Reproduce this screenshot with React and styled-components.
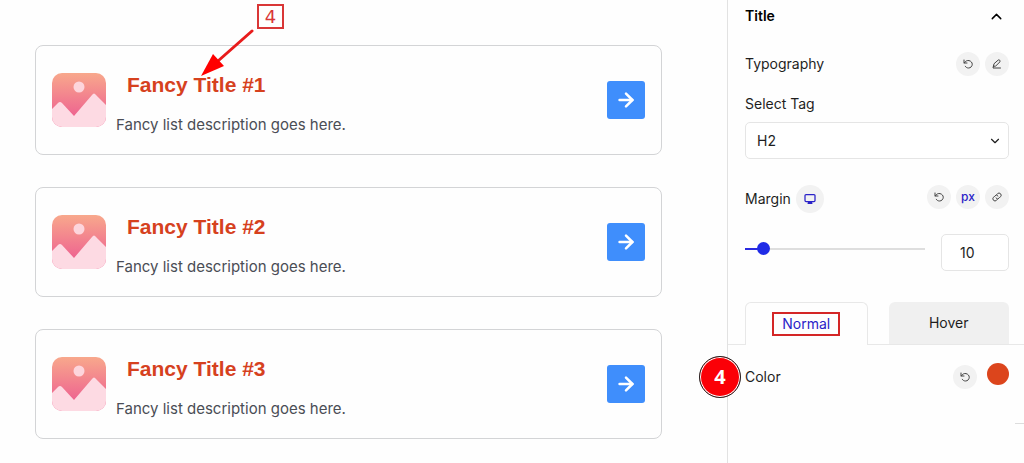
import React, { useState } from "react";
import styled, { createGlobalStyle } from "styled-components";
import { ArrowRight, ChevronUp, ChevronDown, Link2 } from "lucide-react";

const items = [
  { id: 1, title: "Fancy Title #1" },
  { id: 2, title: "Fancy Title #2" },
  { id: 3, title: "Fancy Title #3" },
];

const MAX_MARGIN = 140;

function ResetIcon() {
  return (
    <LineIcon width="10" height="10" viewBox="0 0 20 20" aria-hidden="true">
      <path d="M2 2v6h6" />
      <path d="M2.500 8C5 3.500 9 2.500 12 3.200c4 .9 6.500 4 6.500 7.300 0 4-3.200 7.500-7.500 7.500-3 0-5.300-1.400-6.500-3.500" />
    </LineIcon>
  );
}

function EditIcon() {
  return (
    <LineIcon width="10" height="10" viewBox="0 0 20 20" aria-hidden="true">
      <path d="M3 14l1-4.500L12.500 2q1.500-1 3 .5t.5 3L8 13.500z" />
      <path d="M3 14l-1 4h15" />
    </LineIcon>
  );
}

function DesktopIcon() {
  return (
    <svg width="12" height="12" viewBox="0 0 24 24" fill="none" aria-hidden="true">
      <rect x="2" y="3" width="20" height="14" rx="2" stroke="currentColor" strokeWidth="2.500" />
      <path d="M8 17h8l1 5H7z" fill="currentColor" />
    </svg>
  );
}

function Thumbnail() {
  return (
    <Thumb viewBox="0 0 54 54" aria-hidden="true">
      <defs>
        <linearGradient id="sky" x1="0" y1="0" x2="0" y2="1">
          <stop offset="0" stopColor="#f8a88c" />
          <stop offset="0.8" stopColor="#ee6490" />
        </linearGradient>
        <clipPath id="frame">
          <rect width="54" height="54" rx="10" />
        </clipPath>
      </defs>
      <g clipPath="url(#frame)">
        <rect width="54" height="54" fill="url(#sky)" />
        <circle cx="27" cy="14" r="5.500" fill="#fdd5dc" />
        <path
          d="M0 36l6-6q2-2 4 0l12 13 18-21q2-3 4 0l10 10v22H0z"
          fill="#fddae3"
        />
      </g>
    </Thumb>
  );
}

function ListItem({ title, marked }) {
  return (
    <Card>
      <Thumbnail />
      <CardText>
        <CardTitle>{title}</CardTitle>
        <CardInfo>Fancy list description goes here.</CardInfo>
      </CardText>
      <GoButton type="button" aria-label={`Open ${title}`}>
        <ArrowRight size={22} strokeWidth={2.75} />
      </GoButton>
      {marked && (
        <Pointer>
          <PointerLabel>4</PointerLabel>
          <svg width="54" height="48" viewBox="0 0 54 48" aria-hidden="true">
            <path d="M51 2L17 32" stroke="#e81c1c" strokeWidth="3" strokeLinecap="round" />
            <path d="M0 47L12 25 23 37z" fill="#ff0000" />
          </svg>
        </Pointer>
      )}
    </Card>
  );
}

export default function App() {
  const [tag, setTag] = useState("H2");
  const [margin, setMargin] = useState(10);
  const [tab, setTab] = useState("Normal");

  return (
    <Page>
      <GlobalStyle />
      <Preview>
        {items.map((item) => (
          <ListItem key={item.id} title={item.title} marked={item.id === 1} />
        ))}
      </Preview>

      <Sidebar>
        <PanelHeader type="button" aria-expanded="true">
          Title
          <ChevronUp size={17} />
        </PanelHeader>

        <Row $top={20}>
          <span>Typography</span>
          <Actions>
            <RoundButton type="button" aria-label="Reset typography">
              <ResetIcon />
            </RoundButton>
            <RoundButton type="button" aria-label="Edit typography">
              <EditIcon />
            </RoundButton>
          </Actions>
        </Row>

        <FieldLabel htmlFor="tag">Select Tag</FieldLabel>
        <SelectBox>
          <select id="tag" value={tag} onChange={(e) => setTag(e.target.value)}>
            <option>H1</option>
            <option>H2</option>
            <option>H3</option>
            <option>H4</option>
          </select>
          <ChevronDown size={14} />
        </SelectBox>

        <Row $top={26}>
          <Actions>
            <label htmlFor="margin">Margin</label>
            <RoundButton type="button" $large $active aria-label="Desktop">
              <DesktopIcon />
            </RoundButton>
          </Actions>
          <Actions $raised>
            <RoundButton type="button" aria-label="Reset margin">
              <ResetIcon />
            </RoundButton>
            <RoundButton type="button" $active>
              px
            </RoundButton>
            <RoundButton type="button" aria-label="Link sides">
              <LinkIcon width="10" height="10" viewBox="0 0 20 20" aria-hidden="true">
                <path d="M8 12a4 4 0 0 0 6 .4l3-3a4 4 0 0 0-6-6L9.500 5" />
                <path d="M12 8a4 4 0 0 0-6-.4l-3 3a4 4 0 0 0 6 6l1.500-1.600" />
              </LinkIcon>
            </RoundButton>
          </Actions>
        </Row>

        <SliderRow>
          <Slider
            id="margin"
            type="range"
            min="0"
            max={MAX_MARGIN}
            value={margin}
            style={{ "--fill": `${(margin / MAX_MARGIN) * 100}%` }}
            onChange={(e) => setMargin(e.target.value)}
          />
          <NumberBox
            type="text"
            aria-label="Margin value"
            value={margin}
            onChange={(e) => setMargin(e.target.value)}
          />
        </SliderRow>

        <Tabs role="tablist">
          {["Normal", "Hover"].map((name) => (
            <Tab
              key={name}
              type="button"
              role="tab"
              aria-selected={tab === name}
              $active={tab === name}
              onClick={() => setTab(name)}
            >
              {name === "Normal" ? <Outline>{name}</Outline> : name}
            </Tab>
          ))}
        </Tabs>

        <Row $top={18}>
          <StepBadge>4</StepBadge>
          <span>Color</span>
          <Actions $wide>
            <RoundButton type="button" aria-label="Reset color">
              <ResetIcon />
            </RoundButton>
            <Swatch type="button" aria-label="Pick color" />
          </Actions>
        </Row>
        <Divider />
      </Sidebar>
    </Page>
  );
}

const GlobalStyle = createGlobalStyle`
  * {
    box-sizing: border-box;
  }
  body {
    margin: 0;
    background: #fefefe;
    color: #1e1e1e;
    font-family: Inter, "Liberation Sans", sans-serif;
    font-size: 14px;
    line-height: 20px;
  }
  button,
  input,
  select {
    font: inherit;
    color: inherit;
  }
`;

const Page = styled.div`
  display: flex;
  min-height: 100vh;
`;

const Preview = styled.main`
  flex: 1;
  display: flex;
  flex-direction: column;
  gap: 32px;
  padding: 45px 65px 24px 35px;
`;

const Card = styled.article`
  position: relative;
  display: flex;
  align-items: center;
  padding: 16px;
  min-height: 110px;
  border: 1px solid #d3d4d6;
  border-radius: 8px;
`;

const Thumb = styled.svg`
  width: 54px;
  height: 54px;
  flex: none;
`;

const CardText = styled.div`
  flex: 1;
  padding: 8px 0 0 10px;
`;

const CardTitle = styled.h2`
  margin: 0 0 18px 11px;
  color: #d6411e;
  font-family: "Liberation Sans", Arial, sans-serif;
  font-size: 21px;
  line-height: 24px;
`;

const CardInfo = styled.p`
  margin: 0;
  color: #4a4d55;
  font-size: 15px;
`;

const GoButton = styled.button`
  display: grid;
  place-items: center;
  width: 38px;
  height: 38px;
  padding: 0;
  border: 0;
  border-radius: 3px;
  background: #3f8efc;
  color: #fff;
`;

const Pointer = styled.div`
  position: absolute;
  top: -42px;
  left: 165px;
  svg {
    display: block;
    fill: none;
  }
`;

const PointerLabel = styled.span`
  display: block;
  width: 27px;
  height: 25px;
  margin-left: 56px;
  border: 2px solid #d93636;
  color: #d93636;
  font-family: "DejaVu Sans", sans-serif;
  font-size: 18px;
  line-height: 22px;
  text-align: center;
`;

const Sidebar = styled.aside`
  width: 297px;
  flex: none;
  padding: 0 15px 0 17px;
  border-left: 1px solid #e2e2e2;
`;

const PanelHeader = styled.button`
  display: flex;
  align-items: center;
  justify-content: space-between;
  width: 100%;
  height: 32px;
  padding: 0 4px 0 0;
  border: 0;
  background: none;
  color: #000;
  font-weight: 600;
`;

const Row = styled.div`
  position: relative;
  display: flex;
  align-items: center;
  justify-content: space-between;
  margin-top: ${(props) => props.$top}px;
`;

const Actions = styled.div`
  display: flex;
  align-items: center;
  align-self: ${(props) => (props.$raised ? "flex-start" : "auto")};
  gap: ${(props) => (props.$wide ? 10 : 5)}px;
`;

const RoundButton = styled.button`
  display: grid;
  place-items: center;
  width: ${(props) => (props.$large ? 28 : 24)}px;
  height: ${(props) => (props.$large ? 28 : 24)}px;
  padding: 0;
  border: 0;
  border-radius: 50%;
  background: #f2f2f2;
  color: ${(props) => (props.$active ? "#2a22c8" : "#444")};
  font-size: 12px;
  font-weight: 500;
`;

const LineIcon = styled.svg`
  fill: none;
  stroke: currentColor;
  stroke-width: 2;
  stroke-linecap: round;
  stroke-linejoin: round;
`;

const LinkIcon = styled(LineIcon)``;

const FieldLabel = styled.label`
  display: block;
  margin-top: 18px;
`;

const SelectBox = styled.div`
  display: grid;
  align-items: center;
  margin-top: 8px;
  select,
  svg {
    grid-area: 1 / 1;
  }
  select {
    appearance: none;
    height: 37px;
    padding: 0 11px;
    border: 1px solid #e5e5e5;
    border-radius: 5px;
    background: #fff;
  }
  svg {
    justify-self: end;
    margin-right: 7px;
    pointer-events: none;
  }
`;

const SliderRow = styled.div`
  display: flex;
  align-items: center;
  gap: 16px;
  margin-top: 21px;
`;

const Slider = styled.input`
  appearance: none;
  flex: 1;
  min-width: 0;
  height: 13px;
  margin: 0 0 8px;
  background: linear-gradient(#2a2ae0, #2a2ae0) left / var(--fill) 2px no-repeat,
    linear-gradient(#dedede, #dedede) center / 100% 2px no-repeat;
  &::-webkit-slider-thumb {
    appearance: none;
    width: 13px;
    height: 13px;
    border-radius: 50%;
    background: #1f2be6;
  }
`;

const NumberBox = styled.input`
  width: 68px;
  height: 37px;
  padding: 0 18px;
  border: 1px solid #e5e5e5;
  border-radius: 5px;
  background: #fff;
`;

const Tabs = styled.div`
  display: flex;
  gap: 21px;
  height: 43px;
  margin: 31px -15px 0 -17px;
  padding: 0 15px 0 17px;
  border-bottom: 1px solid #e8e8e8;
`;

const Tab = styled.button`
  flex: 1;
  height: ${(props) => (props.$active ? 43 : 42)}px;
  padding: 0;
  border: ${(props) => (props.$active ? "1px solid #e8e8e8" : "0")};
  border-bottom: 0;
  border-radius: 6px 6px 0 0;
  background: ${(props) => (props.$active ? "#fefefe" : "#f0f0f0")};
  color: ${(props) => (props.$active ? "#2a22c8" : "#1e1e1e")};
`;

const Outline = styled.span`
  display: inline-block;
  padding: 0 8px;
  border: 2px solid #d42626;
`;

const StepBadge = styled.span`
  position: absolute;
  top: 50%;
  left: -46px;
  width: 42px;
  height: 42px;
  margin-top: -21px;
  border: 1px solid #222;
  border-radius: 50%;
  box-shadow: inset 0 0 0 1px #fff;
  background: #fb0007;
  color: #fff;
  font-family: "Open Sans", sans-serif;
  font-size: 20px;
  font-weight: 700;
  line-height: 40px;
  text-align: center;
`;

const Swatch = styled.button`
  width: 22px;
  height: 22px;
  margin-bottom: 5px;
  padding: 0;
  border: 0;
  border-radius: 50%;
  background: #dc451c;
`;

const Divider = styled.hr`
  width: 9px;
  margin: 33px -15px 0 auto;
  border: 0;
  border-top: 1px solid #ddd;
`;
